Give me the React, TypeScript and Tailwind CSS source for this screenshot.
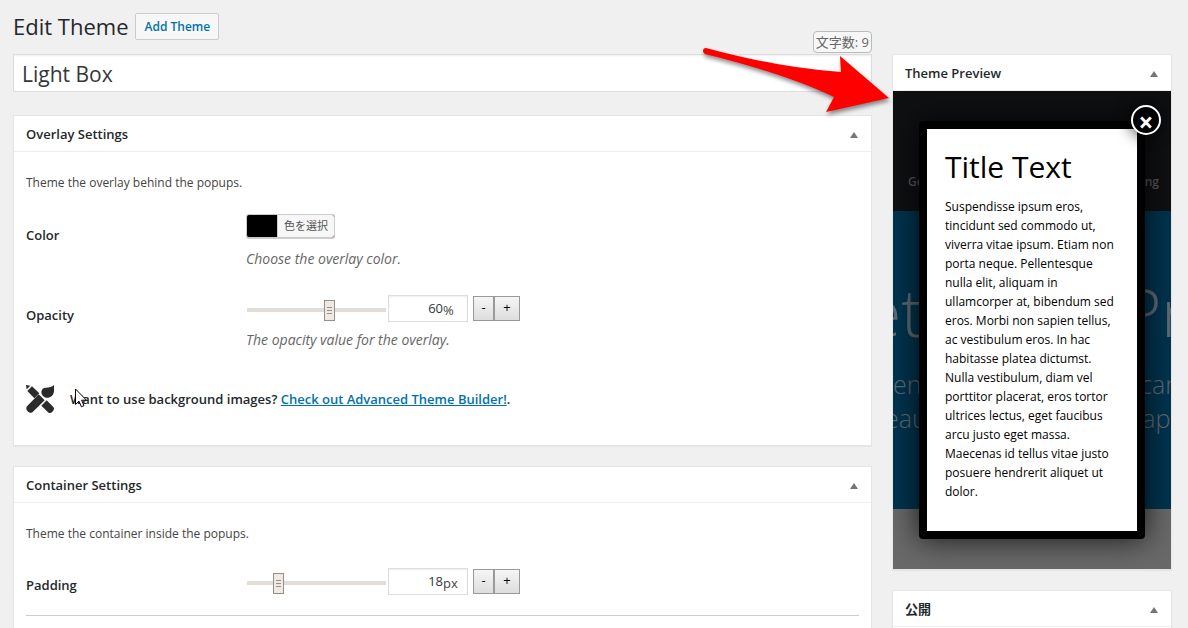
import { ReactNode, useState } from "react";

interface PanelProps {
  title: string;
  children?: ReactNode;
}

function Panel({ title, children }: PanelProps) {
  return (
    <section className="border border-[#e5e5e5] bg-white shadow-[0_1px_1px_rgba(0,0,0,0.04)]">
      <div className="flex h-9 items-center justify-between border-b border-[#eeeeee] px-3 pt-[2px]">
        <h2 className="text-[13px] font-semibold text-[#23282d]">{title}</h2>
        <button type="button" aria-label={`Toggle ${title}`} className="p-px">
          <svg width="8" height="6" viewBox="0 0 8 6" className="fill-[#72777c]">
            <path d="M4 0 8 6H0z" />
          </svg>
        </button>
      </div>
      {children}
    </section>
  );
}

interface RangeFieldProps {
  id: string;
  unit: string;
  initial: number;
  max: number;
}

function RangeField({ id, unit, initial, max }: RangeFieldProps) {
  const [value, setValue] = useState(initial);
  const update = (next: number) => setValue(Math.min(max, Math.max(0, next)));

  return (
    <div className="flex h-7 items-center pl-px">
      <input
        type="range"
        aria-label={`${id} slider`}
        min={0}
        max={max}
        value={value}
        onChange={(e) => update(Number(e.target.value))}
        className="mt-1 h-[21px] w-[139px] appearance-none bg-transparent [&::-webkit-slider-runnable-track]:h-1 [&::-webkit-slider-runnable-track]:bg-[#e2ddd7] [&::-webkit-slider-thumb]:-mt-2 [&::-webkit-slider-thumb]:h-[21px] [&::-webkit-slider-thumb]:w-[11px] [&::-webkit-slider-thumb]:appearance-none [&::-webkit-slider-thumb]:border [&::-webkit-slider-thumb]:border-[#989087] [&::-webkit-slider-thumb]:bg-[#eee9e5] [&::-webkit-slider-thumb]:bg-[repeating-linear-gradient(#989087_0_1px,transparent_1px_3px)] [&::-webkit-slider-thumb]:bg-[length:5px_7px] [&::-webkit-slider-thumb]:bg-center [&::-webkit-slider-thumb]:bg-no-repeat"
      />
      <div className="relative ml-[2px]">
        <input
          id={id}
          type="text"
          value={value}
          onChange={(e) => update(Number(e.target.value) || 0)}
          className="block h-[27px] w-20 border border-[#dddddd] bg-white pr-6 text-right text-[13px] text-[#32373c] shadow-[inset_0_1px_2px_rgba(0,0,0,0.07)]"
        />
        <span className="absolute top-[5px] left-[55px] text-[13px] leading-5 text-[#444444]">
          {unit}
        </span>
      </div>
      <div className="ml-[5px] flex h-[25px] text-[13px] text-black">
        <button
          type="button"
          onClick={() => update(value - 1)}
          className="w-[21px] border border-[#999999] bg-linear-to-b from-[#f6f6f6] to-[#dddddd]"
        >
          -
        </button>
        <button
          type="button"
          onClick={() => update(value + 1)}
          className="w-[26px] border border-[#999999] bg-linear-to-b from-[#f6f6f6] to-[#dddddd]"
        >
          +
        </button>
      </div>
    </div>
  );
}

function ToolsIcon() {
  return (
    <svg width="28" height="28" viewBox="0 0 84 84" className="fill-[#2b2b2b]">
      <path d="M0 0 13 2 2 13z" />
      <path d="M4 18 18 4 40 25 25 40z" />
      <path d="M46 62 62 46 82 66Q87 72 79 80 72 87 66 82z" />
      <path d="M84 0C87 20 82 37 66 38 60 39 55 37 51 33 42 23 46 8 60 8 70 8 78 6 84 0z" />
      <path d="M38 28 56 46 20 81Q13 87 5 79 -2 72 3 64z" />
    </svg>
  );
}

function Pointer() {
  return (
    <svg
      width="13"
      height="20"
      viewBox="0 0 13 20"
      className="absolute -top-px left-[5px] fill-white stroke-black"
    >
      <path d="M.5 1V16.5L4 13.2 6.4 18.8 9 17.6 6.6 12.2H11.5z" />
    </svg>
  );
}

function Arrow() {
  return (
    <svg
      width="200"
      height="80"
      viewBox="0 0 200 80"
      className="pointer-events-none absolute -top-3 -right-7 z-10 fill-[#ff0000] drop-shadow-[1px_3px_2px_rgba(0,0,0,0.45)]"
    >
      <path d="M6 6Q3 6 3 9 3 11 5 12 Q86 32 134 55L126 70 189 56 140 14 141 30Q80 26 6 6z" />
    </svg>
  );
}

function ThemePreview() {
  return (
    <div className="relative overflow-hidden">
      {/* dimmed page behind the popup */}
      <div className="absolute inset-0 flex flex-col font-light text-[#5f6b73]">
        <div className="flex h-[120px] items-end justify-between bg-[#0f1012] px-3 pb-5 text-[12px] font-semibold text-[#55585a]">
          <span className="pl-[3px]">Ge</span>
          <span>ng</span>
        </div>
        <div className="h-[298px] bg-[#00344f] pt-[60px]">
          <div className="-mr-4 -ml-7 flex justify-between text-[66px] leading-[80px]">
            <span>et</span>
            <span>Pr</span>
          </div>
          <div className="-mx-1 flex justify-between pt-4 text-[25px] leading-[34px]">
            <div className="pl-1">
              en
              <br />
              <span className="-ml-2">eau</span>
            </div>
            <div>
              car
              <br />
              <span className="pl-[2px]">ap</span>
            </div>
          </div>
        </div>
        <div className="flex-1 bg-[#696969]" />
      </div>

      <div className="relative mx-[26px] my-[30px] rounded-sm border-8 border-black bg-white p-[18px] text-black shadow-[0_0_30px_rgba(2,2,2,0.8)]">
        <h3 className="text-[30px] leading-[40px]">Title Text</h3>
        <p className="mt-[10px] mb-3 text-[12px] leading-[19px]">
          Suspendisse ipsum eros, tincidunt sed commodo ut, viverra vitae ipsum.
          Etiam non porta neque. Pellentesque nulla elit, aliquam in ullamcorper
          at, bibendum sed eros. Morbi non sapien tellus, ac vestibulum eros. In
          hac habitasse platea dictumst. Nulla vestibulum, diam vel porttitor
          placerat, eros tortor ultrices lectus, eget faucibus arcu justo eget
          massa. Maecenas id tellus vitae justo posuere hendrerit aliquet ut
          dolor.
        </p>
        <button
          type="button"
          aria-label="Close"
          className="absolute -top-6 -right-6 flex h-[30px] w-[30px] items-center justify-center rounded-full border-2 border-white bg-black pt-1 text-[26px] leading-6 font-bold text-white shadow-[0_0_15px_1px_rgba(2,2,2,0.75)]"
        >
          ×
        </button>
      </div>
    </div>
  );
}

export default function App() {
  const [title, setTitle] = useState("Light Box");

  return (
    <div className="h-screen overflow-hidden bg-[#f0f0f0] pt-[13px] pr-4 pl-[13px] font-['Open_Sans','Noto_Sans_CJK_JP',sans-serif] text-[12px] text-[#444444]">
      <header className="flex h-[27px] items-center gap-[7px]">
        <h1 className="text-[22px] text-[#23282d]">Edit Theme</h1>
        <a
          href="#add"
          className="rounded-xs border border-[#cccccc] bg-[#f7f7f7] px-2 text-[12px] leading-[25px] font-semibold text-[#0073aa]"
        >
          Add Theme
        </a>
      </header>

      <div className="mt-[14px] flex items-start gap-5">
        <main className="min-w-0 flex-1">
          <div className="relative">
            <input
              type="text"
              aria-label="Theme name"
              value={title}
              onChange={(e) => setTitle(e.target.value)}
              className="block h-[38px] w-full border border-[#dddddd] bg-white px-2 pt-px text-[21px] text-[#32373c] shadow-[inset_0_1px_2px_rgba(0,0,0,0.07)]"
            />
            <span className="absolute right-0 bottom-full mb-px rounded border border-[#bbbbbb] bg-[#f7f7f7] px-[2px] text-[13px] leading-5 text-[#666666]">
              文字数: {title.length}
            </span>
            <Arrow />
          </div>

          <div className="mt-[23px] flex flex-col gap-5">
            <Panel title="Overlay Settings">
              <div className="px-3 pt-[21px] pb-8">
                <p className="leading-5">Theme the overlay behind the popups.</p>
                <div className="mt-[21px] grid grid-cols-[220px_1fr] gap-y-[25px]">
                  <label
                    htmlFor="color"
                    className="pt-[11px] text-[13px] leading-5 font-semibold text-[#23282d]"
                  >
                    Color
                  </label>
                  <div>
                    <button
                      id="color"
                      type="button"
                      className="flex h-6 items-stretch overflow-hidden rounded-[3px] border border-[#cccccc] bg-black text-[11px] text-[#555555] shadow-[0_1px_0_#cccccc]"
                    >
                      <span className="ml-[30px] border-l border-[#cccccc] bg-[#f7f7f7] px-[6px] leading-[22px]">
                        色を選択
                      </span>
                    </button>
                    <p className="mt-[11px] text-[14px] leading-5 text-[#666666] italic">
                      Choose the overlay color.
                    </p>
                  </div>
                  <label
                    htmlFor="opacity"
                    className="pt-[11px] text-[13px] leading-5 font-semibold text-[#23282d]"
                  >
                    Opacity
                  </label>
                  <div>
                    <RangeField id="opacity" unit="%" initial={60} max={100} />
                    <p className="mt-2 text-[14px] leading-5 text-[#666666] italic">
                      The opacity value for the overlay.
                    </p>
                  </div>
                </div>
                <div className="mt-[35px] flex items-center gap-4">
                  <ToolsIcon />
                  <p className="relative text-[13px] leading-5 font-semibold text-[#23282d]">
                    Want to use background images?{" "}
                    <a href="#builder" className="text-[#0073aa] underline">
                      Check out Advanced Theme Builder!
                    </a>
                    .
                    <Pointer />
                  </p>
                </div>
              </div>
            </Panel>

            <Panel title="Container Settings">
              <div className="px-3 pt-[21px] pb-8">
                <p className="leading-5">Theme the container inside the popups.</p>
                <div className="mt-[23px] grid grid-cols-[220px_1fr] border-b border-[#cccccc] pb-5">
                  <label
                    htmlFor="padding"
                    className="pt-2 text-[13px] leading-5 font-semibold text-[#23282d]"
                  >
                    Padding
                  </label>
                  <RangeField id="padding" unit="px" initial={18} max={90} />
                </div>
              </div>
            </Panel>
          </div>
        </main>

        <aside className="flex w-[280px] shrink-0 flex-col gap-5">
          <Panel title="Theme Preview">
            <ThemePreview />
          </Panel>
          <Panel title="公開">
            <div className="h-20" />
          </Panel>
        </aside>
      </div>
    </div>
  );
}
